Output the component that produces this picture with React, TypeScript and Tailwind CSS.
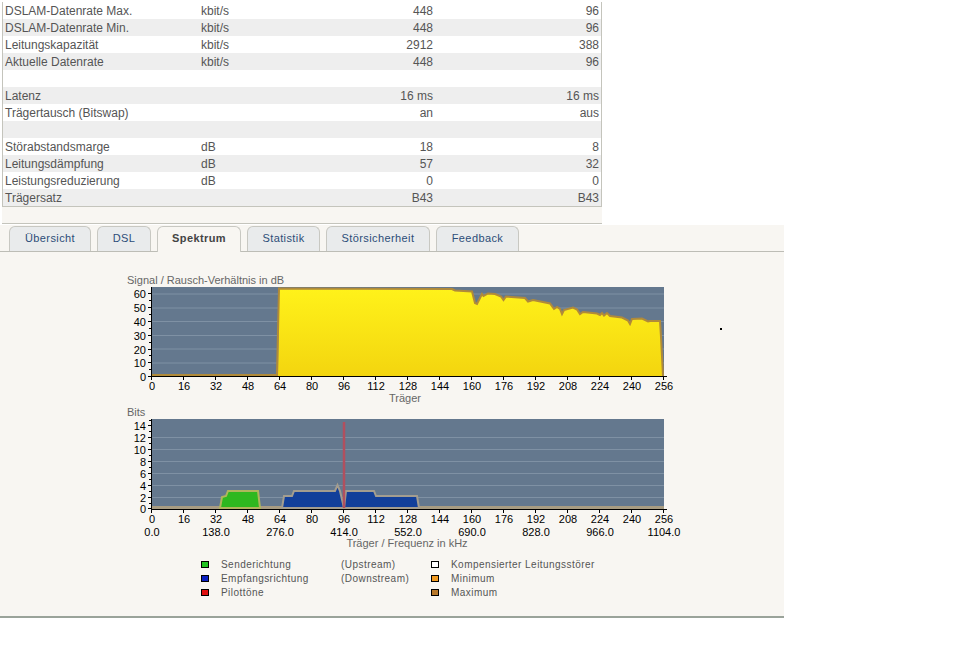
const rows = [
  { label: "DSLAM-Datenrate Max.", unit: "kbit/s", a: "448", b: "96" },
  { label: "DSLAM-Datenrate Min.", unit: "kbit/s", a: "448", b: "96" },
  { label: "Leitungskapazität", unit: "kbit/s", a: "2912", b: "388" },
  { label: "Aktuelle Datenrate", unit: "kbit/s", a: "448", b: "96" },
  { label: "", unit: "", a: "", b: "" },
  { label: "Latenz", unit: "", a: "16 ms", b: "16 ms" },
  { label: "Trägertausch (Bitswap)", unit: "", a: "an", b: "aus" },
  { label: "", unit: "", a: "", b: "" },
  { label: "Störabstandsmarge", unit: "dB", a: "18", b: "8" },
  { label: "Leitungsdämpfung", unit: "dB", a: "57", b: "32" },
  { label: "Leistungsreduzierung", unit: "dB", a: "0", b: "0" },
  { label: "Trägersatz", unit: "", a: "B43", b: "B43" },
];

const tabs = [
  { name: "Übersicht", w: "w-[82px]" },
  { name: "DSL", w: "w-[54px]" },
  { name: "Spektrum", w: "w-[84px]", active: true },
  { name: "Statistik", w: "w-[73px]" },
  { name: "Störsicherheit", w: "w-[104px]" },
  { name: "Feedback", w: "w-[83px]" },
];

const carriers = [0, 16, 32, 48, 64, 80, 96, 112, 128, 144, 160, 176, 192, 208, 224, 240, 256];
const freqs = ["0.0", "138.0", "276.0", "414.0", "552.0", "690.0", "828.0", "966.0", "1104.0"];

// traced from the reference, x / y are page pixels
const snr: [number, number][] = [
  [279, 288.5], [452, 289], [455, 290.5], [472, 291.5], [475, 303], [477, 304], [482, 294], [483.5, 296], [488, 293.5],
  [495, 294], [501, 296.5], [503.5, 300], [506, 296.5], [525, 298], [528, 301.5], [533, 300], [550, 303.5], [554, 309],
  [557, 307], [560, 309], [562, 314], [564, 310], [573, 307.5], [577, 309.5], [580, 314], [583, 312], [597, 313.5],
  [600, 315], [602, 313], [604, 315.5], [607, 313], [610, 316], [622, 317.5], [628, 320.5], [630, 324], [632, 319],
  [642, 318.5], [648, 321.5], [650, 321], [660, 321], [661, 337], [663, 376],
];

const green: [number, number][] = [[220, 508], [222, 497], [226, 496], [228, 491], [258, 491], [260, 508]];
const blue: [number, number][] = [
  [282, 508], [284, 496], [292, 496], [294, 491], [335, 491], [337.5, 485], [340, 491], [344, 508], [346, 491],
  [374, 491], [376, 496], [417, 496], [419, 508],
];

const pts = (list: [number, number][]) => list.map(([x, y]) => `${x},${y}`).join(" ");

function PlotGrid({ top, lines }: { top: number; lines: number[] }) {
  return (
    <>
      <rect x={152} y={top} width={512} height={90} fill="#64788e" />
      {lines.map((y) => (
        <line key={y} x1={152} x2={664} y1={y} y2={y} stroke="#7f91a4" />
      ))}
    </>
  );
}

function YAxis({ top, bottom, ticks, minor }: { top: number; bottom: number; ticks: { y: number; t: string }[]; minor: number[] }) {
  return (
    <>
      <line x1={151.5} x2={151.5} y1={top} y2={bottom} stroke="#000" />
      {ticks.map((k) => (
        <g key={k.t}>
          <line x1={148} x2={151} y1={k.y + 0.5} y2={k.y + 0.5} stroke="#000" />
          <text x={146} y={k.y + 5} textAnchor="end" fontSize={11} fill="#000">
            {k.t}
          </text>
        </g>
      ))}
      {minor.map((y) => (
        <line key={y} x1={149} x2={151} y1={y + 0.5} y2={y + 0.5} stroke="#000" />
      ))}
    </>
  );
}

function XAxis({ y }: { y: number }) {
  return (
    <>
      <line x1={151} x2={667} y1={y + 0.5} y2={y + 0.5} stroke="#000" />
      {carriers.map((c) => (
        <g key={c}>
          <line x1={152 + c * 2 - 0.5} x2={152 + c * 2 - 0.5} y1={y} y2={y + 4} stroke="#000" />
          <text x={152 + c * 2} y={y + 14} textAnchor="middle" fontSize={11} fill="#000">
            {c}
          </text>
        </g>
      ))}
    </>
  );
}

function SnrChart() {
  return (
    <svg width={600} height={135} viewBox="100 272 600 135" className="block">
      <defs>
        <linearGradient id="yel" x1="0" x2="0" y1="0" y2="1">
          <stop offset="0" stopColor="#fff21a" />
          <stop offset="1" stopColor="#f3d50f" />
        </linearGradient>
      </defs>
      <text x={127} y={284} fontSize={11} fill="#666">
        Signal / Rausch-Verhältnis in dB
      </text>
      <PlotGrid top={287} lines={[294, 308, 321.5, 335.5, 349, 363]} />
      <polygon points={`278,376 ${pts(snr)} 663,376`} fill="url(#yel)" />
      <polyline points={`152,375 277,375 ${pts(snr)}`} fill="none" stroke="#b08a3a" strokeWidth={2} />
      <YAxis
        top={287}
        bottom={377}
        ticks={[
          { y: 376, t: "0" },
          { y: 362, t: "10" },
          { y: 349, t: "20" },
          { y: 335, t: "30" },
          { y: 321, t: "40" },
          { y: 307, t: "50" },
          { y: 293, t: "60" },
        ]}
        minor={[369, 355, 342, 328, 314, 300]}
      />
      <XAxis y={376} />
      <text x={405} y={402} textAnchor="middle" fontSize={11} fill="#666">
        Träger
      </text>
    </svg>
  );
}

function BitsChart() {
  return (
    <svg width={600} height={146} viewBox="100 407 600 146" className="block">
      <text x={127} y={416} fontSize={11} fill="#666">
        Bits
      </text>
      <PlotGrid top={419} lines={[437.5, 449.5, 461.5, 473.5, 485.5, 497.5]} />
      <rect x={152} y={506} width={512} height={3} fill="#a89c82" />
      <polygon points={pts(green)} fill="#2eb81f" stroke="#aeb65c" strokeWidth={2} />
      <polygon points={pts(blue)} fill="#123f9a" stroke="#a39d8f" strokeWidth={2} />
      <line x1={344} x2={344} y1={422} y2={508} stroke="#b0505f" strokeWidth={2.5} />
      <YAxis
        top={419}
        bottom={509}
        ticks={[
          { y: 508, t: "0" },
          { y: 497, t: "2" },
          { y: 485, t: "4" },
          { y: 473, t: "6" },
          { y: 461, t: "8" },
          { y: 449, t: "10" },
          { y: 437, t: "12" },
          { y: 425, t: "14" },
        ]}
        minor={[503, 491, 479, 467, 455, 443, 431, 420]}
      />
      <XAxis y={509} />
      {freqs.map((f, i) => (
        <text key={f} x={152 + i * 64} y={536} textAnchor="middle" fontSize={11} fill="#000">
          {f}
        </text>
      ))}
      <text x={407} y={547} textAnchor="middle" fontSize={11} fill="#666">
        Träger / Frequenz in kHz
      </text>
    </svg>
  );
}

function Swatch({ color }: { color: string }) {
  return <span className={`block w-[8px] h-[7px] border border-black ${color}`} />;
}

export default function App() {
  return (
    <div className="w-[971px] h-[670px] bg-white pt-[2px] font-['Liberation_Sans',Arial,sans-serif] overflow-hidden">
      <div className="ml-[2px] w-[600px] border-x border-b border-[#c4c4bc] text-[12px] leading-[19px] text-[#555555]">
        {rows.map((r, i) => (
          <div key={i} className={`flex h-[17px] ${i % 2 === 1 ? "bg-[#eeeeee]" : "bg-white"}`}>
            <div className="w-[198px] pl-[2px]">{r.label}</div>
            <div className="w-[100px]">{r.unit}</div>
            <div className="w-[132px] text-right">{r.a}</div>
            <div className="flex-1 text-right pr-[2px]">{r.b}</div>
          </div>
        ))}
      </div>
      <div className="ml-[2px] w-[600px] h-[17px] bg-[#f8f6f2] border-b border-[#c4c4bc]" />
      <div className="relative mt-[1px] w-[784px] h-[393px] bg-[#f8f6f2] border-b-2 border-[#9aa39a]">
        <div className="flex items-end h-[27px] pl-[9px] gap-[6px] border-b border-[#bdbdb6]">
          {tabs.map((t) => (
            <div
              key={t.name}
              className={`${t.w} flex items-center justify-center pb-[2px] rounded-t-[6px] border-x border-t border-[#c8c8c2] text-[11px] tracking-[0.4px] ${
                t.active
                  ? "h-[26px] -mb-px bg-[#f8f6f2] font-bold text-[#444444]"
                  : "h-[25px] bg-[#e9ebec] text-[#2c4d78]"
              }`}
            >
              {t.name}
            </div>
          ))}
        </div>
        <div className="pl-[100px] pt-[20px]">
          <SnrChart />
          <BitsChart />
        </div>
        <div className="ml-[201px] mt-[4px] grid grid-cols-[20px_120px_90px_20px_1fr] auto-rows-[14px] items-center text-[10px] tracking-[0.45px] text-[#555555]">
          <Swatch color="bg-[#22c422]" />
          <span>Senderichtung</span>
          <span>(Upstream)</span>
          <Swatch color="bg-white" />
          <span>Kompensierter Leitungsstörer</span>
          <Swatch color="bg-[#0a1fc0]" />
          <span>Empfangsrichtung</span>
          <span>(Downstream)</span>
          <Swatch color="bg-[#f09a20]" />
          <span>Minimum</span>
          <Swatch color="bg-[#e01010]" />
          <span>Pilottöne</span>
          <span />
          <Swatch color="bg-[#b8782a]" />
          <span>Maximum</span>
        </div>
        <span className="absolute left-[720px] top-[103px] block w-[2px] h-[2px] bg-black" />
      </div>
    </div>
  );
}
